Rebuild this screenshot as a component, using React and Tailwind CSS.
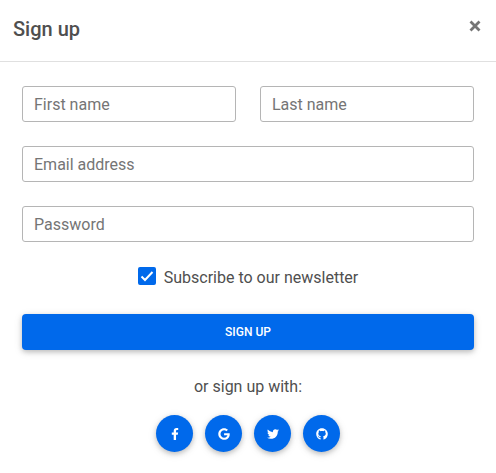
import React from "react";
import { FaFacebookF, FaGoogle, FaTwitter, FaGithub } from "react-icons/fa";

const fieldClass =
  "block h-9 w-full min-w-0 rounded-[3px] border border-[#b5b5b5] bg-white px-[11px] text-base text-[#4f4f4f] outline-none placeholder:text-[#757575] focus:border-[#0069eb]";

const providers = [
  { name: "Facebook", Icon: FaFacebookF },
  { name: "Google", Icon: FaGoogle },
  { name: "Twitter", Icon: FaTwitter },
  { name: "GitHub", Icon: FaGithub },
];

function Field({ label, type = "text" }) {
  return <input type={type} aria-label={label} placeholder={label} className={fieldClass} />;
}

export default function App() {
  return (
    <div className="min-h-screen bg-white font-['Roboto',sans-serif] text-base text-[#4f4f4f]">
      <header className="flex items-center justify-between border-b border-[#e0e0e0] pt-[14px] pr-[15px] pb-4 pl-[13px]">
        <h1 className="text-xl leading-[31px] font-medium">Sign up</h1>
        <button type="button" aria-label="Close" className="-mt-2 text-[#757575]">
          <svg viewBox="0 0 12 12" className="size-3" fill="none" stroke="currentColor" strokeWidth="2.8">
            <path d="M1.5 1.5 10.5 10.5M10.5 1.5 1.5 10.5" />
          </svg>
        </button>
      </header>
      <form className="px-[22px] py-6" onSubmit={(e) => e.preventDefault()}>
        <div className="grid grid-cols-2 gap-6">
          <Field label="First name" />
          <Field label="Last name" />
          <div className="col-span-2">
            <Field label="Email address" type="email" />
          </div>
          <div className="col-span-2">
            <Field label="Password" type="password" />
          </div>
        </div>
        <div className="mt-6 flex justify-center gap-2 leading-6">
          <span className="mt-px grid size-[18px]">
            <input
              id="newsletter"
              type="checkbox"
              defaultChecked
              className="peer col-start-1 row-start-1 size-[18px] appearance-none rounded-[2px] border-2 border-[#757575] checked:border-[#0069eb] checked:bg-[#0069eb]"
            />
            <svg
              viewBox="0 0 18 18"
              className="pointer-events-none col-start-1 row-start-1 hidden size-[18px] peer-checked:block"
              fill="none"
              stroke="white"
              strokeWidth="2"
            >
              <path d="M3.5 9.5 7 13 14.5 5" />
            </svg>
          </span>
          <label htmlFor="newsletter">Subscribe to our newsletter</label>
        </div>
        <button
          type="submit"
          className="mt-6 block h-9 w-full rounded-[4px] bg-[#0069eb] text-xs font-medium text-white uppercase shadow-[0_2px_5px_rgba(0,0,0,0.2),0_2px_10px_rgba(0,0,0,0.1)]"
        >
          Sign up
        </button>
        <p className="mt-[25px] text-center leading-6">or sign up with:</p>
        <div className="mt-4 flex justify-center gap-3">
          {providers.map(({ name, Icon }) => (
            <button
              key={name}
              type="button"
              aria-label={name}
              className="flex size-[37px] items-center justify-center rounded-full bg-[#0069eb] text-white shadow-[0_2px_5px_rgba(0,0,0,0.2),0_2px_10px_rgba(0,0,0,0.1)]"
            >
              <Icon className="size-3" />
            </button>
          ))}
        </div>
      </form>
    </div>
  );
}
